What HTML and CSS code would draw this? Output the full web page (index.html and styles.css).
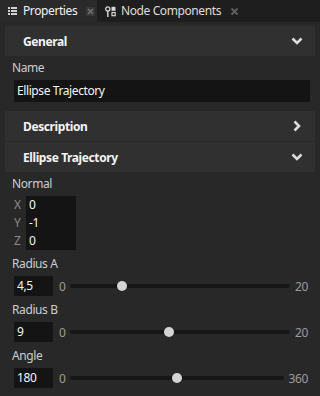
FILE: index.html
```html
<!DOCTYPE html>
<html>
<head>
<meta charset="utf-8">
<link rel="stylesheet" href="styles.css">
</head>
<body>
<div class="tabs">
  <div class="tab active">
    <svg class="tab-icon" width="9" height="8" viewBox="0 0 9 8"><g fill="#d0d0d0"><rect x="0" y="0" width="2" height="2"/><rect x="3" y="0" width="6" height="2"/><rect x="0" y="3" width="2" height="2"/><rect x="3" y="3" width="6" height="2"/><rect x="0" y="6" width="2" height="2"/><rect x="3" y="6" width="6" height="2"/></g></svg>
    <span class="tab-label">Properties</span>
    <span class="close boxed"><svg width="9" height="9" viewBox="0 0 9 9"><path d="M2 2L7 7M7 2L2 7" stroke="#707070" stroke-width="1.6"/></svg></span>
  </div>
  <div class="tab">
    <svg class="tab-icon" width="11" height="11" viewBox="0 0 11 11"><circle cx="2.8" cy="3" r="2.1" fill="none" stroke="#d8d8d8" stroke-width="1.3"/><rect x="2.1" y="5" width="1.4" height="6" fill="#d8d8d8"/><rect x="6.5" y="0.8" width="4" height="4" fill="#d8d8d8"/><rect x="7" y="6.5" width="3.2" height="3.2" fill="none" stroke="#d8d8d8" stroke-width="1.2"/></svg>
    <span class="tab-label dim">Node Components</span>
    <span class="close"><svg width="9" height="9" viewBox="0 0 9 9"><path d="M1.5 1.5L7.5 7.5M7.5 1.5L1.5 7.5" stroke="#5e5e5e" stroke-width="2"/></svg></span>
  </div>
</div>

<div class="panel">
  <div class="section">
    <div class="section-header">
      <span>General</span>
      <svg class="chev" width="12" height="8" viewBox="0 0 12 8"><path d="M1.5 1.5L6 6L10.5 1.5" fill="none" stroke="#dcdcdc" stroke-width="2.6"/></svg>
    </div>
    <div class="section-body">
      <div class="field">
        <div class="label">Name</div>
        <div class="input wide">Ellipse Trajectory</div>
      </div>
    </div>
  </div>

  <div class="section">
    <div class="section-header">
      <span>Description</span>
      <svg class="chev right" width="8" height="12" viewBox="0 0 8 12"><path d="M1.5 1.5L6 6L1.5 10.5" fill="none" stroke="#dcdcdc" stroke-width="2.6"/></svg>
    </div>
  </div>

  <div class="section">
    <div class="section-header">
      <span>Ellipse Trajectory</span>
      <svg class="chev" width="12" height="8" viewBox="0 0 12 8"><path d="M1.5 1.5L6 6L10.5 1.5" fill="none" stroke="#dcdcdc" stroke-width="2.6"/></svg>
    </div>
    <div class="section-body">
      <div class="field">
        <div class="label">Normal</div>
        <div class="vector">
          <div class="axes"><span>X</span><span>Y</span><span>Z</span></div>
          <div class="vbox"><span>0</span><span>-1</span><span>0</span></div>
        </div>
      </div>
      <div class="field">
        <div class="label">Radius A</div>
        <div class="slider-row">
          <div class="input num">4,5</div>
          <span class="lim">0</span>
          <div class="track"><span class="thumb" style="left:23.5%"></span></div>
          <span class="lim">20</span>
        </div>
      </div>
      <div class="field">
        <div class="label">Radius B</div>
        <div class="slider-row">
          <div class="input num">9</div>
          <span class="lim">0</span>
          <div class="track"><span class="thumb" style="left:45%"></span></div>
          <span class="lim">20</span>
        </div>
      </div>
      <div class="field">
        <div class="label">Angle</div>
        <div class="slider-row">
          <div class="input num">180</div>
          <span class="lim">0</span>
          <div class="track"><span class="thumb" style="left:50%"></span></div>
          <span class="lim">360</span>
        </div>
      </div>
    </div>
  </div>
</div>
</body>
</html>
```

FILE: styles.css
```css
* { box-sizing: border-box; }
html, body { margin: 0; padding: 0; }
body {
  width: 320px;
  height: 396px;
  overflow: hidden;
  background: #282828;
  font-family: "Noto Sans", "Open Sans", sans-serif;
  font-size: 12px;
  letter-spacing: -0.4px;
  color: #e8e8e8;
}
.tabs {
  display: flex;
  height: 22px;
  background: #1e1e1e;
}
.tab {
  display: flex;
  align-items: center;
  height: 22px;
  padding-left: 8px;
}
.tab.active {
  width: 97px;
  background: #2a2a2a;
}
.tab-icon { flex: none; }
.tab-label {
  margin-left: 6px;
  color: #f2f2f2;
  font-size: 12px;
  line-height: 22px;
  white-space: nowrap;
}
.tab-label.dim { margin-left: 5px; color: #e0dcd6; }
.close {
  display: flex;
  align-items: center;
  justify-content: center;
  width: 9px;
  height: 9px;
  margin-left: 8px;
}
.close.boxed { background: #383838; margin-left: 9px; }
.tab:not(.active) .close { margin-left: 9px; }

.panel {
  padding: 4px 5px 0 5px;
}
.section-header {
  display: flex;
  align-items: center;
  justify-content: space-between;
  height: 30px;
  padding: 0 12px 0 18px;
  background: #303030;
  font-weight: bold;
  color: #f4f4f4;
  margin-bottom: 1px;
}
.section-header .chev.right { margin-right: 2px; }
.section-body {
  padding: 3px 0 9px 7px;
  display: flex;
  flex-direction: column;
  gap: 6px;
}
.field { display: flex; flex-direction: column; }
.label {
  height: 16px;
  line-height: 16px;
  color: #c9ced4;
  margin-bottom: 4px;
}
.input {
  background: #141414;
  color: #f4f4f4;
  padding-left: 3px;
  margin-left: 2px;
}
.input.wide {
  width: 296px;
  height: 22px;
  line-height: 22px;
}
.vector { display: flex; margin-left: 2px; }
.axes, .vbox {
  display: flex;
  flex-direction: column;
}
.axes span, .vbox span {
  height: 18px;
  line-height: 18px;
}
.axes { width: 12px; color: #8c8c8c; }
.vbox {
  width: 50px;
  background: #141414;
  color: #f4f4f4;
  padding-left: 3px;
}
.slider-row {
  display: flex;
  align-items: center;
  width: 298px;
  height: 20px;
}
.input.num {
  width: 39px;
  height: 20px;
  line-height: 20px;
}
.lim { color: #9c9c9c; margin: 0 5px 0 6px; }
.lim:last-child { margin: 0 2px 0 5px; }
.track {
  flex: 1;
  height: 4px;
  border-radius: 2px;
  background: #161616;
  position: relative;
}
.thumb {
  position: absolute;
  top: 50%;
  width: 10px;
  height: 10px;
  margin: -5px 0 0 -5px;
  border-radius: 50%;
  background: #d4d4d4;
}
```
